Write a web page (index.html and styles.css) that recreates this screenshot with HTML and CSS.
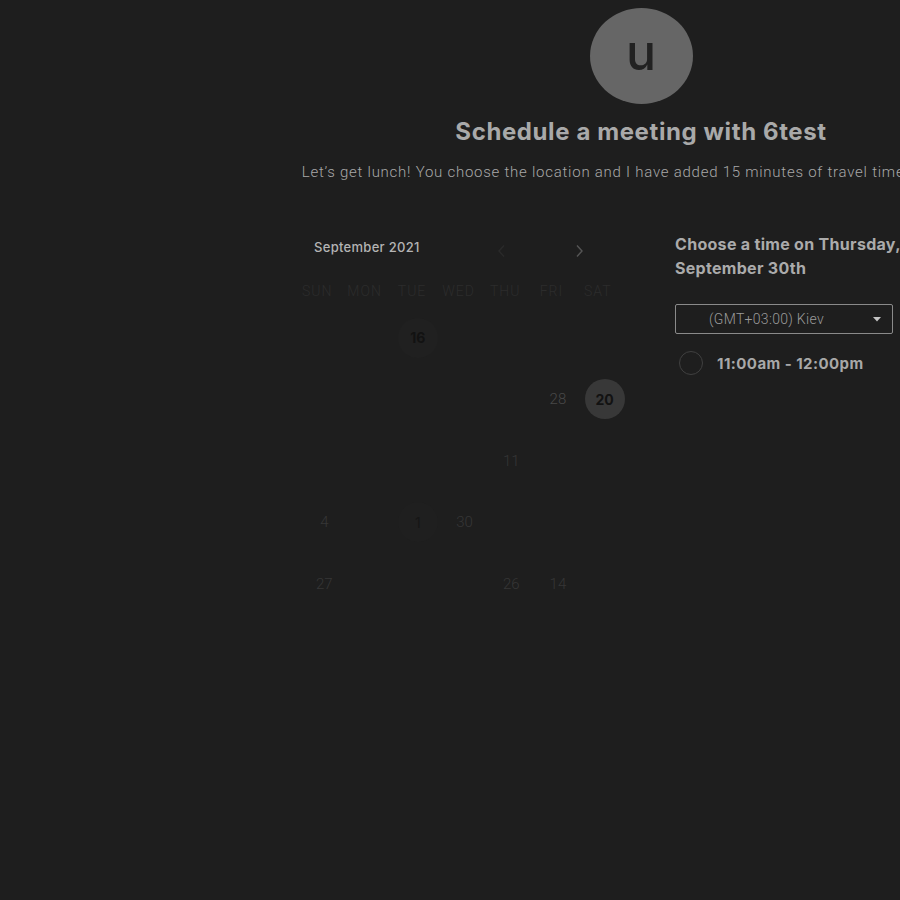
FILE: index.html
```html
<!DOCTYPE html>
<html lang="en">
<head>
<meta charset="utf-8">
<title>Schedule a meeting with 6test</title>
<link rel="stylesheet" href="styles.css">
</head>
<body>
<div class="page">
  <div class="avatar">u</div>
  <h1 class="title">Schedule a meeting with 6test</h1>
  <p class="subtitle">Let’s get lunch! You choose the location and I have added 15 minutes of travel time each way.</p>

  <div class="main">
    <div class="calendar">
      <div class="cal-head">
        <span class="month">September 2021</span>
        <div class="nav">
          <svg class="chev prev" width="10" height="14" viewBox="0 0 10 14"><path d="M7 1.5 L2 7 L7 12.5" fill="none" stroke="currentColor" stroke-width="1.4"/></svg>
          <svg class="chev next" width="10" height="14" viewBox="0 0 10 14"><path d="M3 1.5 L8 7 L3 12.5" fill="none" stroke="currentColor" stroke-width="1.4"/></svg>
        </div>
      </div>
      <div class="weekdays">
        <span>SUN</span><span>MON</span><span>TUE</span><span>WED</span><span>THU</span><span>FRI</span><span>SAT</span>
      </div>
      <div class="days">
        <span></span><span></span><span class="day dark ring">16</span><span></span><span></span><span></span><span></span>
        <span></span><span></span><span></span><span></span><span></span><span class="day mid">28</span><span class="day dark sel">20</span>
        <span></span><span></span><span></span><span></span><span class="day faint">11</span><span></span><span></span>
        <span class="day faint">4</span><span></span><span class="day dark thin">1</span><span class="day faint">30</span><span></span><span></span><span></span>
        <span class="day faint">27</span><span></span><span></span><span></span><span class="day faint">26</span><span class="day faint">14</span><span></span>
      </div>
    </div>

    <div class="times">
      <h2 class="times-title">Choose a time on Thursday, September 30th</h2>
      <div class="select">
        <span class="select-text">(GMT+03:00) Kiev</span>
        <svg class="caret" width="8" height="5" viewBox="0 0 8 5"><path d="M0 0 H8 L4 4.5 Z" fill="currentColor"/></svg>
      </div>
      <div class="slot">
        <span class="radio"></span>
        <span class="slot-text">11:00am - 12:00pm</span>
      </div>
    </div>
  </div>
</div>
</body>
</html>
```

FILE: styles.css
```css
html, body {
  margin: 0;
  padding: 0;
  background: #1e1e1e;
  overflow: hidden;
}
body {
  width: 900px;
  height: 900px;
  font-family: Inter, "Noto Sans", sans-serif;
  color: #aaaaaa;
}
.page {
  width: 1000px;
  margin-left: 141px;
  padding-top: 8px;
  display: flex;
  flex-direction: column;
  align-items: center;
}
.avatar {
  width: 103px;
  height: 96px;
  border-radius: 50%;
  background: #666666;
  color: #222222;
  font-family: Inter, sans-serif;
  font-size: 50px;
  font-weight: 500;
  line-height: 88px;
  text-align: center;
}
.title {
  margin: 14px 0 0;
  font-size: 24px;
  line-height: 28px;
  font-weight: 700;
  color: #a9a9a9;
  letter-spacing: 0.6px;
}
.subtitle {
  margin: 16px 0 0;
  font-family: Roboto, sans-serif;
  font-weight: 300;
  font-size: 15px;
  line-height: 20px;
  color: #a8a8a8;
  white-space: nowrap;
  letter-spacing: 0.75px;
}
.main {
  align-self: stretch;
  margin-top: 50px;
  padding-left: 160px;
  display: flex;
  gap: 47px;
}
.calendar {
  width: 327px;
}
.cal-head {
  height: 30px;
  display: flex;
  align-items: center;
  justify-content: space-between;
}
.month {
  margin-left: 13px;
  font-size: 13px;
  font-weight: 500;
  letter-spacing: 0.3px;
  color: #b4b4b4;
}
.nav {
  display: flex;
  gap: 67px;
  margin-right: 44px;
  margin-top: 8px;
}
.chev { display: block; }
.chev.prev { color: #2a2a2a; }
.chev.next { color: #555555; }
.weekdays {
  margin-top: 17px;
  height: 24px;
  display: grid;
  grid-template-columns: repeat(7, 1fr);
  align-items: center;
}
.weekdays span {
  text-align: center;
  padding-right: 14px;
  font-family: Roboto, sans-serif;
  font-weight: 300;
  font-size: 14px;
  letter-spacing: 1px;
  color: #2c2c2c;
}
.days {
  position: relative;
  z-index: 0;
  margin-top: 4px;
  display: grid;
  grid-template-columns: repeat(7, 1fr);
  grid-auto-rows: 61.5px;
}
.days span {
  display: flex;
  align-items: center;
  justify-content: center;
}
.day {
  font-family: Roboto, sans-serif;
  font-size: 15px;
  font-weight: 300;
}
.day.faint { color: #363636; }
.day.mid { color: #484848; }
.day.dark {
  color: #121212;
  font-weight: 700;
  font-family: Inter, sans-serif;
  font-size: 14px;
}
.day.ring, .day.sel, .day.thin {
  position: relative;
}
.day.ring::before,
.day.sel::before,
.day.thin::before {
  content: "";
  position: absolute;
  width: 40px;
  height: 40px;
  border-radius: 50%;
  left: 50%;
  top: 50%;
  transform: translate(-50%, -50%);
  z-index: -1;
}
.day.ring::before { background: #202020; }
.day.sel::before { background: #383838; }
.day.thin {
  font-weight: 400;
  color: #161616;
}
.day.thin::before { background: #1f1f1f; }

.times {
  width: 218px;
}
.times-title {
  margin: 0;
  width: 240px;
  font-size: 16px;
  line-height: 24px;
  font-weight: 700;
  letter-spacing: 0.3px;
  color: #ababab;
}
.select {
  margin-top: 24px;
  height: 28px;
  border: 1px solid #8a8a8a;
  border-radius: 2px;
  display: flex;
  align-items: center;
}
.select-text {
  flex: 1;
  text-align: center;
  padding-right: 16px;
  font-family: Roboto, sans-serif;
  font-weight: 300;
  font-size: 14px;
  letter-spacing: 0.3px;
  color: #9a9a9a;
}
.caret {
  color: #c4c4c4;
  margin-right: 11px;
}
.slot {
  margin-top: 14px;
  height: 30px;
  display: flex;
  align-items: center;
  gap: 14px;
}
.radio {
  margin-left: 4px;
  width: 22px;
  height: 22px;
  border: 1px solid #404040;
  border-radius: 50%;
}
.slot-text {
  font-size: 15px;
  font-weight: 700;
  letter-spacing: 0.45px;
  color: #a8a8a8;
}
```
